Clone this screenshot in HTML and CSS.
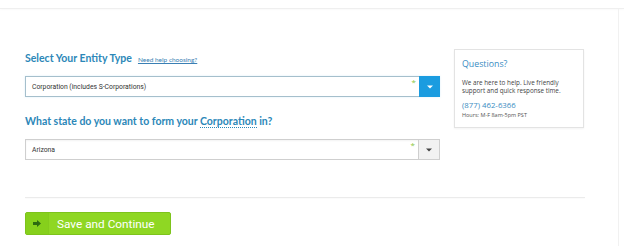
FILE: index.html
```html
<!DOCTYPE html>
<html>
<head>
<meta charset="utf-8">
<link rel="stylesheet" href="styles.css">
</head>
<body>
<div class="topbar"></div>
<div class="page">
  <div class="main">
    <div class="form">
      <div class="label-row">
        <h2 class="label">Select Your Entity Type</h2>
        <a class="help" href="#">Need help choosing?</a>
      </div>
      <div class="select select-active">
        <span class="value">Corporation (includes S-Corporations)</span>
        <span class="star">*</span>
        <span class="btn btn-blue"><svg width="6" height="4" viewBox="0 0 6 4"><path d="M0 0.5H6L3 3.5Z" fill="#fff"/></svg></span>
      </div>
      <h2 class="label label2">What state do you want to form your <span class="dotted">Corporation</span> in?</h2>
      <div class="select">
        <span class="value">Arizona</span>
        <span class="star">*</span>
        <span class="btn btn-gray"><svg width="6" height="4" viewBox="0 0 6 4"><path d="M0 0.5H6L3 3.5Z" fill="#444"/></svg></span>
      </div>
    </div>
    <aside class="card">
      <h3 class="card-title">Questions?</h3>
      <p class="card-text">We are here to help. Live friendly support and quick response time.</p>
      <div class="phone">(877) 462-6366</div>
      <div class="hours">Hours: M-F 8am-5pm PST</div>
    </aside>
  </div>
  <hr class="divider">
  <button class="save"><span class="save-icon"><svg width="8" height="7" viewBox="0 0 8 7"><path d="M0 2H4V0L8 3.5L4 7V5H0Z" fill="#2d6a10"/></svg></span><span class="save-text">Save and Continue</span></button>
</div>
</body>
</html>
```
FILE: styles.css
```css
html, body {
  margin: 0;
  padding: 0;
  background: #fff;
}
body {
  font-family: Lato, "Open Sans", sans-serif;
  width: 624px;
  height: 246px;
  overflow: hidden;
}
.topbar {
  height: 8px;
  background: #fff;
  border-bottom: 1px solid #efefef;
  box-shadow: 0 1px 2px rgba(0,0,0,0.025);
}
.page {
  margin-right: 5px;
  border-right: 1px solid #f1f1f1;
  padding: 40px 0 0 25px;
  height: 197px;
  overflow: hidden;
}
.main {
  display: flex;
  align-items: flex-start;
}
.form {
  width: 415px;
}
.label-row {
  display: flex;
  align-items: baseline;
  gap: 6px;
  box-sizing: border-box;
  height: 27px;
  padding-top: 3px;
}
.label {
  margin: 0;
  font-size: 10.5px;
  line-height: 12px;
  font-weight: 700;
  color: #2b87b8;
}
.help {
  font-size: 6.5px;
  color: #3a7fb4;
  text-decoration: underline;
  font-family: Lato, sans-serif;
}
.select {
  display: flex;
  align-items: stretch;
  box-sizing: border-box;
  width: 415px;
  height: 21px;
  border: 1px solid #cfcfcf;
  box-shadow: inset 0 1px 2px rgba(0,0,0,0.05);
  background: #fff;
}
.select-active {
  border-color: #a5bfcc;
  box-shadow: 0 0 2px rgba(30,157,223,0.15);
}
.value {
  flex: 1;
  display: flex;
  align-items: center;
  padding-left: 6px;
  font-size: 6.8px;
  color: #333;
  font-family: Roboto, sans-serif;
}
.star {
  color: #8cc63f;
  font-size: 8px;
  line-height: 8px;
  margin-top: 1px;
  margin-right: 3px;
  font-family: "Open Sans", sans-serif;
}
.btn {
  width: 20px;
  display: flex;
  align-items: center;
  justify-content: center;
}
.btn-blue {
  background: #1b9ce0;
  margin: -1px -1px -1px 0;
  width: 21px;
}
.btn-gray {
  background: #f2f2f2;
  border-left: 1px solid #cfcfcf;
}
.label2 {
  margin: 18px 0 12px;
}
.dotted {
  border-bottom: 1px dotted #2b87b8;
}
.card {
  box-sizing: border-box;
  margin-left: 14px;
  width: 130px;
  height: 79px;
  padding: 9px 6px 0 7px;
  border: 1px solid #e3e3e3;
  box-shadow: 0 1px 2px rgba(0,0,0,0.05);
  font-family: "Open Sans", sans-serif;
}
.card-title {
  margin: 0;
  font-size: 8.8px;
  line-height: 10px;
  font-weight: 400;
  color: #3a8cc2;
}
.card-text {
  margin: 10px 0 0;
  font-size: 6.3px;
  line-height: 8px;
  color: #444;
}
.phone {
  margin-top: 5px;
  font-size: 7.8px;
  line-height: 10px;
  color: #3a8cc2;
}
.hours {
  margin-top: 1px;
  font-size: 5.5px;
  line-height: 8px;
  color: #555;
}
.divider {
  margin: 37px 0 0 0;
  width: 560px;
  border: 0;
  border-top: 1px solid #ebebeb;
  box-shadow: 0 1px 1px rgba(0,0,0,0.02);
  height: 0;
}
.save {
  margin-top: 14px;
  display: flex;
  align-items: stretch;
  padding: 0;
  box-sizing: border-box;
  width: 146px;
  height: 23px;
  border: 1px solid #7dc31c;
  border-radius: 2px;
  background: #8fd723;
  overflow: hidden;
}
.save-icon {
  width: 22px;
  display: flex;
  align-items: center;
  justify-content: center;
  background: #86d01c;
  border-right: 1px solid #84cb1d;
}
.save-text {
  flex: 1;
  display: flex;
  align-items: center;
  padding-left: 8px;
  color: #fff;
  font-family: Roboto, sans-serif;
  font-size: 11.8px;
}
```
